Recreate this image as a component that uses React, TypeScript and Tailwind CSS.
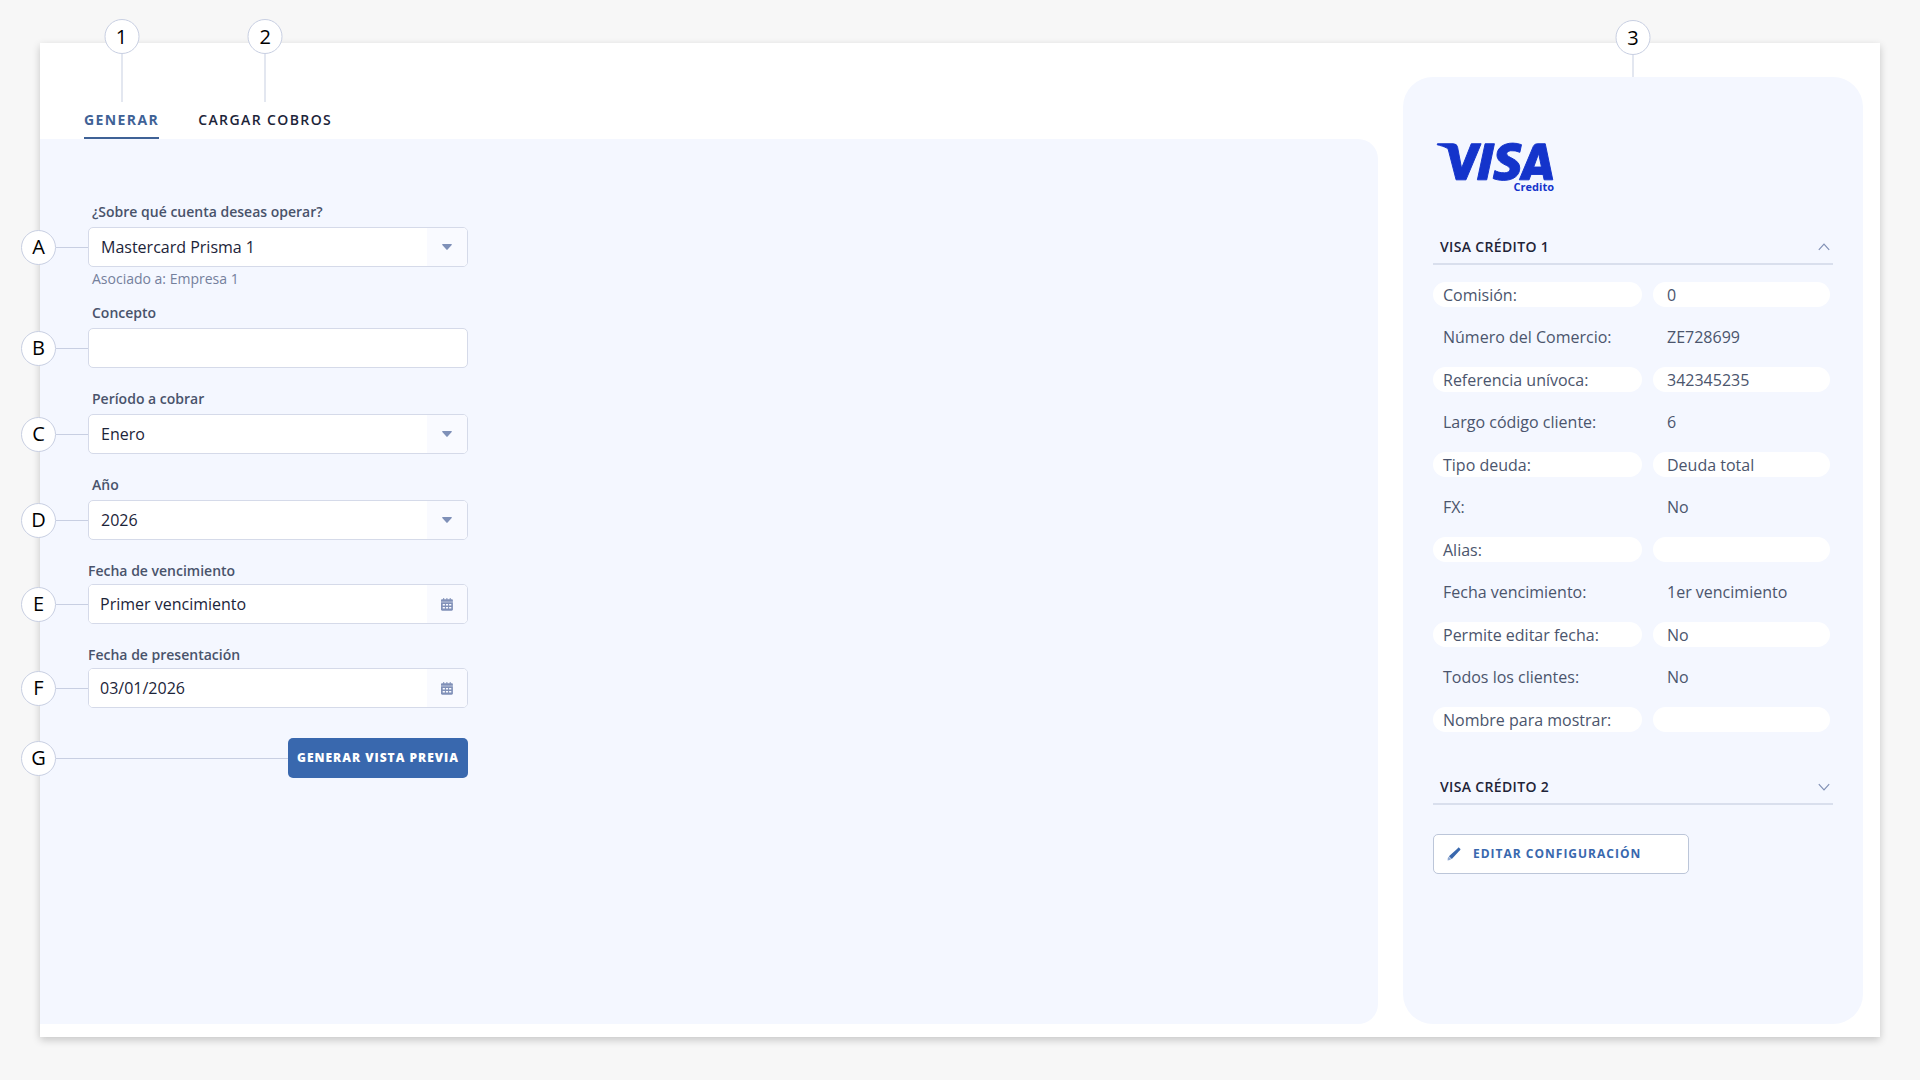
import { useState, type ReactNode } from "react";
import { SiVisa } from "react-icons/si";

type Side = "top" | "left";

function Callout({ mark, side, line }: { mark: string; side: Side; line: string }) {
  const circle = (
    <span className="flex size-[35px] shrink-0 items-center justify-center rounded-full border border-[#c8cfe2] bg-white text-xl font-normal tracking-normal text-black">
      {mark}
    </span>
  );
  if (side === "top") {
    return (
      <span aria-hidden="true" className="pointer-events-none absolute bottom-full left-1/2 flex -translate-x-1/2 flex-col items-center">
        {circle}
        <span className={`w-px bg-[#c8cfe2] ${line}`} />
      </span>
    );
  }
  return (
    <span aria-hidden="true" className="pointer-events-none absolute inset-y-0 right-full flex items-center">
      {circle}
      <span className={`h-px bg-[#c8cfe2] ${line}`} />
    </span>
  );
}

function Arrow() {
  return (
    <svg viewBox="0 0 10 6" className="h-[6px] w-[10px] fill-[#7f90b8]">
      <path d="M.8 0h8.4c.6 0 .9.7.5 1.1L5.6 5.6a.8.8 0 0 1-1.2 0L.3 1.1C-.1.7.2 0 .8 0Z" />
    </svg>
  );
}

function CalendarIcon() {
  return (
    <svg viewBox="0 0 12 13" className="h-[13px] w-[12px] fill-[#8090b8]">
      <path
        fillRule="evenodd"
        d="M1.200 1.200h1V0h1v1.200h2.200V0h1v1.200h2.300V0h1v1.200h1c.7 0 1.200.5 1.200 1.200v1.300H0V2.400c0-.7.5-1.200 1.200-1.200ZM0 4.200h11.900v7.400c0 .7-.5 1.200-1.200 1.200H1.200c-.7 0-1.200-.5-1.200-1.200V4.200ZM1.700 6v1.600h2.200V6H1.700Zm3.200 0v1.600h2.200V6H4.900Zm3.200 0v1.600h2.200V6H8.100ZM1.700 9v1.600h2.200V9H1.700Zm3.200 0v1.600h2.200V9H4.900Zm3.200 0v1.600h2.200V9H8.100Z"
      />
    </svg>
  );
}

function PencilIcon() {
  return (
    <svg viewBox="0 0 14 14" className="size-[14px]">
      <path
        className="fill-[#3968ae]"
        d="M1.900 9.300 9.200 2.800 11 .9c.4-.4.9-.4 1.300 0l.9.9c.4.4.4.9 0 1.300l-1.700 1.700-6.700 7.100-2.900-2.600Z"
      />
      <path className="fill-[#8fa8d2]" d="M1.700 9.700 4.300 12.100 2.900 13.100.6 13.400l.2-2.400.9-1.300Z" />
    </svg>
  );
}

function Chevron({ up }: { up: boolean }) {
  return (
    <svg viewBox="0 0 12 8" className="h-2 w-3 fill-none stroke-[#8190b5]">
      <path d={up ? "M.8 6.800 6 1.200l5.200 5.600" : "M.8 1.200 6 6.800l5.200-5.600"} strokeWidth="1.200" />
    </svg>
  );
}

const labelBase = "block text-sm leading-5 font-semibold text-[#49536b]";

function SelectField({
  id,
  mark,
  label,
  options,
  helper,
}: {
  id: string;
  mark: string;
  label: string;
  options: string[];
  helper?: ReactNode;
}) {
  return (
    <div>
      <label htmlFor={id} className={`${labelBase} mb-[5px] pl-1`}>
        {label}
      </label>
      <div className="relative">
        <Callout mark={mark} side="left" line="w-8" />
        <select
          id={id}
          className="block h-10 w-full appearance-none rounded-[5px] border border-[#d5dae9] bg-white pr-12 pl-3 text-base text-[#1c2439] outline-none"
        >
          {options.map((o) => (
            <option key={o}>{o}</option>
          ))}
        </select>
        <span className="pointer-events-none absolute inset-y-px right-px flex w-10 items-center justify-center rounded-r-[4px] bg-[#f9faff]">
          <Arrow />
        </span>
      </div>
      {helper}
    </div>
  );
}

function DateField({ id, mark, label, value }: { id: string; mark: string; label: string; value: string }) {
  return (
    <div>
      <label htmlFor={id} className={`${labelBase} mb-[3px]`}>
        {label}
      </label>
      <div className="relative">
        <Callout mark={mark} side="left" line="w-8" />
        <div className="flex h-10 overflow-hidden rounded-[5px] border border-[#d5dae9] bg-white">
          <input
            id={id}
            type="text"
            defaultValue={value}
            className="min-w-0 flex-1 bg-white pl-[11px] text-base text-[#1c2439] outline-none"
          />
          <button type="button" aria-label="Abrir calendario" className="flex w-10 items-center justify-center bg-[#f9faff]">
            <CalendarIcon />
          </button>
        </div>
      </div>
    </div>
  );
}

const details: [string, string][] = [
  ["Comisión:", "0"],
  ["Número del Comercio:", "ZE728699"],
  ["Referencia unívoca:", "342345235"],
  ["Largo código cliente:", "6"],
  ["Tipo deuda:", "Deuda total"],
  ["FX:", "No"],
  ["Alias:", ""],
  ["Fecha vencimiento:", "1er vencimiento"],
  ["Permite editar fecha:", "No"],
  ["Todos los clientes:", "No"],
  ["Nombre para mostrar:", ""],
];

function AccordionHeader({ title, open, onClick }: { title: string; open: boolean; onClick: () => void }) {
  return (
    <button
      type="button"
      aria-expanded={open}
      onClick={onClick}
      className="flex h-9 w-full items-center justify-between border-b-2 border-[#d9dfed] pt-0.5 pr-[3px] pl-[7px] text-sm font-semibold tracking-wide text-[#1f2438]"
    >
      {title}
      <Chevron up={open} />
    </button>
  );
}

function Details() {
  return (
    <dl className="mt-[17px] flex flex-col gap-[17px] pr-[3px] text-base text-[#4b556d]">
      {details.map(([name, value], i) => (
        <div key={name} className={`flex gap-[11px] ${i % 2 === 0 ? "h-[25px]" : "h-[26px]"}`}>
          <dt className={`flex w-[209px] items-center rounded-full pl-[10px] ${i % 2 === 0 ? "bg-white" : ""}`}>{name}</dt>
          <dd className={`flex flex-1 items-center rounded-full pl-[14px] ${i % 2 === 0 ? "bg-white" : ""}`}>{value}</dd>
        </div>
      ))}
    </dl>
  );
}

export default function App() {
  const [first, setFirst] = useState(true);
  const [second, setSecond] = useState(false);

  return (
    <div className="flex min-h-screen flex-col bg-[#f7f7f7] px-10 py-[43px] font-['Open_Sans','Noto_Sans',sans-serif]">
      <main className="flex flex-1 gap-[25px] bg-white pr-[17px] pb-[13px] shadow-[0_3px_8px_rgba(0,0,0,0.2)]">
        <section className="flex min-w-0 flex-1 flex-col">
          <div role="tablist" className="flex h-24 items-end gap-[39px] pl-11">
            <button
              type="button"
              role="tab"
              aria-selected="true"
              className="relative h-[37px] border-b-2 border-[#3f6296] text-sm font-bold tracking-widest text-[#3f6296]"
            >
              <Callout mark="1" side="top" line="h-12" />
              GENERAR
            </button>
            <button
              type="button"
              role="tab"
              aria-selected="false"
              className="relative h-[37px] border-b-2 border-transparent text-sm font-semibold tracking-widest text-[#1c2439]"
            >
              <Callout mark="2" side="top" line="h-12" />
              CARGAR COBROS
            </button>
          </div>

          <div className="flex-1 rounded-r-[20px] bg-[#f4f7ff] pt-[63px] pl-12">
            <form className="flex w-[380px] flex-col gap-[21px]" onSubmit={(e) => e.preventDefault()}>
              <SelectField
                id="cuenta"
                mark="A"
                label="¿Sobre qué cuenta deseas operar?"
                options={["Mastercard Prisma 1"]}
                helper={<p className="mt-0.5 -mb-[7px] pl-1 text-sm leading-5 text-[#74809c]">Asociado a: Empresa 1</p>}
              />
              <div>
                <label htmlFor="concepto" className={`${labelBase} mb-[5px] pl-1`}>
                  Concepto
                </label>
                <div className="relative">
                  <Callout mark="B" side="left" line="w-8" />
                  <input
                    id="concepto"
                    type="text"
                    className="block h-10 w-full rounded-[5px] border border-[#d5dae9] bg-white pl-3 text-base text-[#1c2439] outline-none"
                  />
                </div>
              </div>
              <SelectField id="periodo" mark="C" label="Período a cobrar" options={["Enero"]} />
              <SelectField id="anio" mark="D" label="Año" options={["2026"]} />
              <DateField id="vencimiento" mark="E" label="Fecha de vencimiento" value="Primer vencimiento" />
              <DateField id="presentacion" mark="F" label="Fecha de presentación" value="03/01/2026" />
              <div className="relative mt-[9px] self-end">
                <Callout mark="G" side="left" line="w-[232px]" />
                <button
                  type="submit"
                  className="block h-10 w-[180px] rounded-[5px] bg-[#3968ae] text-xs font-extrabold tracking-[1px] whitespace-nowrap text-white"
                >
                  GENERAR VISTA PREVIA
                </button>
              </div>
            </form>
          </div>
        </section>

        <aside className="relative mt-[34px] w-[460px] rounded-[30px] bg-[#f4f7ff] px-[30px] pt-[65px]">
          <Callout mark="3" side="top" line="h-[22px]" />
          <div className="ml-[3px] flex w-[118px] flex-col items-end text-[#1434cb]">
            <SiVisa viewBox="-0.1 7.9 24.200 8.100" className="h-[39px] w-[118px] stroke-[#1434cb]" strokeWidth="0.2" title="Visa" />
            <span className="text-[11px] leading-3 font-bold">Credito</span>
          </div>

          <div className="mt-9">
            <AccordionHeader title="VISA CRÉDITO 1" open={first} onClick={() => setFirst(!first)} />
            {first && <Details />}
          </div>
          <div className="mt-[37px]">
            <AccordionHeader title="VISA CRÉDITO 2" open={second} onClick={() => setSecond(!second)} />
            {second && <Details />}
          </div>

          <button
            type="button"
            className="mt-[29px] flex h-10 w-64 items-center gap-3 rounded-[5px] border border-[#bcc6d9] bg-white pl-[13px] text-xs font-bold tracking-[1px] text-[#3968ae]"
          >
            <PencilIcon />
            EDITAR CONFIGURACIÓN
          </button>
        </aside>
      </main>
    </div>
  );
}
